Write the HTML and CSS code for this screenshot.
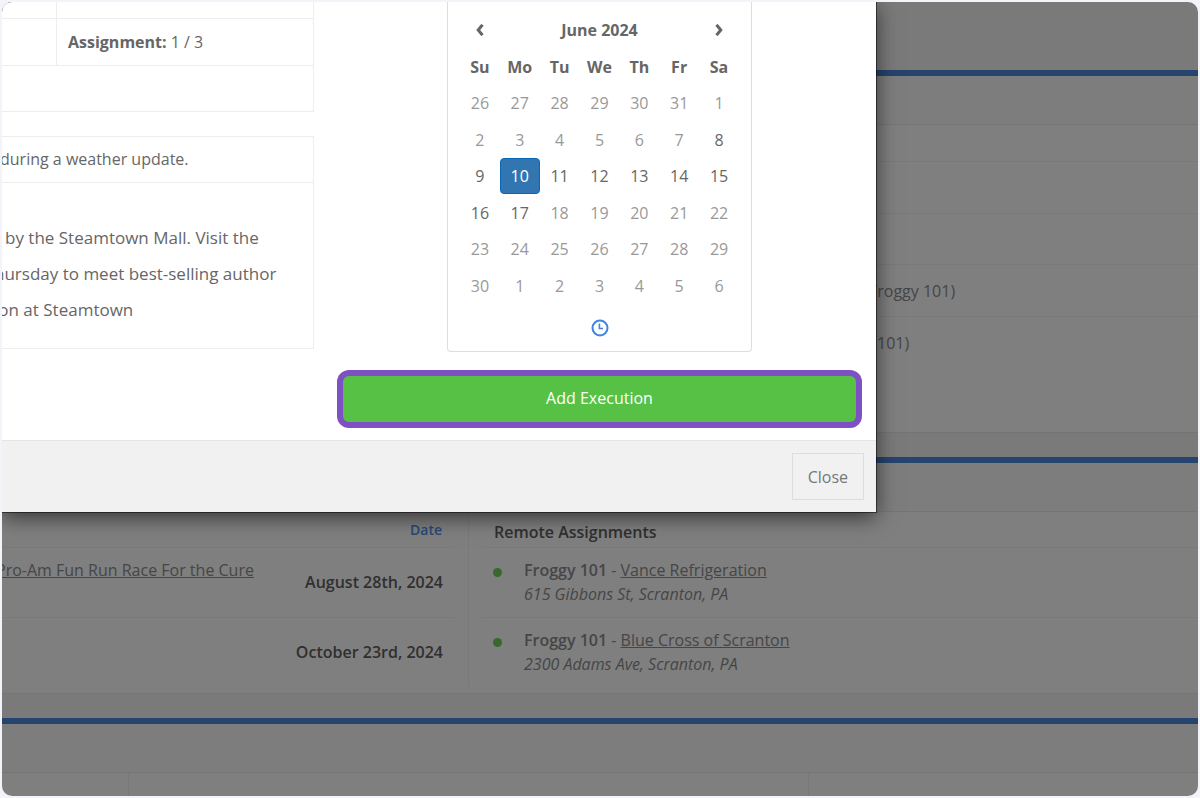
FILE: index.html
```html
<!DOCTYPE html>
<html lang="en">
<head>
    <meta charset="UTF-8">
    <meta name="viewport" content="width=device-width, initial-scale=1.0">
    <title>Add Execution</title>
    <link rel="stylesheet" href="styles.css">
</head>
<body>
    <div class="screen">
        <main class="page">
            <section class="panel panel-orders">
                <div class="panel-heading"></div>
                <ul class="rows">
                    <li class="row row-short"></li>
                    <li class="row"></li>
                    <li class="row row-medium"></li>
                    <li class="row row-station">Froggy 101)</li>
                    <li class="row row-station row-last">101)</li>
                </ul>
            </section>

            <section class="panel">
                <div class="panel-heading"></div>
                <div class="assignments">
                    <div class="col-events">
                        <table class="list">
                            <thead>
                                <tr><th></th><th class="date-head"><a href="#">Date</a></th></tr>
                            </thead>
                            <tbody>
                                <tr>
                                    <td class="event"><a href="#">Pro-Am Fun Run Race For the Cure</a></td>
                                    <td class="date">August 28th, 2024</td>
                                </tr>
                                <tr>
                                    <td class="event"></td>
                                    <td class="date">October 23rd, 2024</td>
                                </tr>
                            </tbody>
                        </table>
                    </div>
                    <div class="col-remote">
                        <table class="list">
                            <thead>
                                <tr><th colspan="2" class="remote-head">Remote Assignments</th></tr>
                            </thead>
                            <tbody>
                                <tr>
                                    <td class="status"><span class="dot"></span></td>
                                    <td class="place"><b>Froggy 101</b> - <a href="#">Vance Refrigeration</a><br><i>615 Gibbons St, Scranton, PA</i></td>
                                </tr>
                                <tr>
                                    <td class="status"><span class="dot"></span></td>
                                    <td class="place"><b>Froggy 101</b> - <a href="#">Blue Cross of Scranton</a><br><i>2300 Adams Ave, Scranton, PA</i></td>
                                </tr>
                            </tbody>
                        </table>
                    </div>
                </div>
            </section>

            <section class="panel">
                <div class="panel-heading"></div>
                <div class="split">
                    <div></div>
                    <div></div>
                    <div></div>
                </div>
            </section>
        </main>

        <div class="backdrop"></div>

        <div class="modal" role="dialog" aria-label="Add Execution">
            <div class="modal-body">
                <div class="details">
                    <table class="info">
                        <tbody>
                            <tr class="info-top"><td class="narrow"></td><td></td></tr>
                            <tr><td class="narrow"></td><td><b>Assignment:</b> 1 / 3</td></tr>
                            <tr class="info-last"><td colspan="2"></td></tr>
                        </tbody>
                    </table>
                    <div class="copy">
                        <p class="copy-title">during a weather update.</p>
                        <p class="copy-text">by the Steamtown Mall. Visit the<br>hursday to meet best-selling author<br>ion at Steamtown</p>
                    </div>
                </div>

                <div class="schedule">
                    <div class="picker">
                        <table class="calendar">
                            <thead>
                                <tr>
                                    <th><button type="button" class="nav" aria-label="Previous month"><svg width="10" height="12" viewBox="0 0 10 12"><path d="M7.5 .8 3.2 6l4.3 5.2" /></svg></button></th>
                                    <th colspan="5">June 2024</th>
                                    <th><button type="button" class="nav" aria-label="Next month"><svg width="10" height="12" viewBox="0 0 10 12"><path d="M2.5 .8 6.8 6l-4.3 5.2" /></svg></button></th>
                                </tr>
                                <tr><th>Su</th><th>Mo</th><th>Tu</th><th>We</th><th>Th</th><th>Fr</th><th>Sa</th></tr>
                            </thead>
                            <tbody>
                                <tr><td class="off">26</td><td class="off">27</td><td class="off">28</td><td class="off">29</td><td class="off">30</td><td class="off">31</td><td class="off">1</td></tr>
                                <tr><td class="off">2</td><td class="off">3</td><td class="off">4</td><td class="off">5</td><td class="off">6</td><td class="off">7</td><td>8</td></tr>
                                <tr><td>9</td><td class="active">10</td><td>11</td><td>12</td><td>13</td><td>14</td><td>15</td></tr>
                                <tr><td>16</td><td>17</td><td class="off">18</td><td class="off">19</td><td class="off">20</td><td class="off">21</td><td class="off">22</td></tr>
                                <tr><td class="off">23</td><td class="off">24</td><td class="off">25</td><td class="off">26</td><td class="off">27</td><td class="off">28</td><td class="off">29</td></tr>
                                <tr><td class="off">30</td><td class="off">1</td><td class="off">2</td><td class="off">3</td><td class="off">4</td><td class="off">5</td><td class="off">6</td></tr>
                            </tbody>
                        </table>
                        <button type="button" class="time" aria-label="Select time">
                            <svg width="18" height="18" viewBox="0 0 18 18"><circle cx="9" cy="9" r="7.5" /><path class="hands" d="M8.4 4.6v4.9h3.6" /></svg>
                        </button>
                    </div>
                    <button type="button" class="btn-add">Add Execution</button>
                </div>
            </div>
            <div class="modal-footer">
                <button type="button" class="btn-close">Close</button>
            </div>
        </div>
    </div>
</body>
</html>
```

FILE: styles.css
```css
* {
    box-sizing: border-box;
}
body {
    margin: 0;
    padding: 2px;
    background: #f3f3f9;
    font-family: "Open Sans", "Noto Sans", sans-serif;
    font-size: 16px;
    line-height: 24px;
    color: #666;
}
button {
    font: inherit;
    cursor: pointer;
}
table {
    width: 100%;
    border-collapse: separate;
    border-spacing: 0;
}
p, ul {
    margin: 0;
    padding: 0;
}
.screen {
    position: relative;
    height: calc(100vh - 4px);
    border-radius: 10px;
    overflow: hidden;
}

/* page behind the dialog */
.page {
    min-height: 100%;
    padding-top: 68px;
    background: #f5f5f5;
    color: #8c8c8c;
}
.panel {
    margin-bottom: 24px;
    background: #fff;
    border-top: 6px solid #4a88dc;
    border-bottom: 1px solid #e8e8e8;
}
.panel-heading {
    height: 49px;
    background: #fafafa;
    border-bottom: 1px solid #ebebeb;
}
.rows {
    list-style: none;
}
.row {
    height: 52px;
    padding: 14px 0;
    border-bottom: 1px solid #f2f2f2;
}
.row-short {
    height: 37px;
}
.row-medium {
    height: 51px;
}
.row-station {
    padding-left: 867px;
}
.row-last {
    height: 115px;
    padding-left: 875px;
    border-bottom: 0;
}
.assignments {
    display: flex;
    padding-bottom: 6px;
}
.col-events {
    width: 467px;
    padding-right: 14px;
    border-right: 1px solid #f2f2f2;
}
.col-remote {
    flex: 1;
    padding-left: 13px;
}
.list th {
    height: 36px;
    padding: 0 12px;
    text-align: left;
    border-bottom: 1px solid #f2f2f2;
}
.list td {
    height: 70px;
    padding: 10px 12px;
    vertical-align: top;
    border-bottom: 1px solid #f2f2f2;
}
.list tr:last-child td {
    height: 69px;
    border-bottom: 0;
}
.list a {
    color: inherit;
}
.list .date-head {
    font-size: 14px;
    font-weight: 600;
    text-align: right;
}
.list .date-head a {
    color: #5590e6;
    text-decoration: none;
}
.list .event {
    padding: 10px 0;
    white-space: nowrap;
}
.event a {
    margin-left: -6px;
}
.list .date {
    padding: 10px 11px 12px 0;
    vertical-align: middle;
    text-align: right;
    white-space: nowrap;
    font-weight: 600;
    color: #606060;
}
.list .remote-head {
    padding-top: 4px;
    font-weight: 600;
    color: #606060;
}
.list .status {
    width: 42px;
}
.list .place {
    padding-left: 0;
}
.place b {
    font-weight: 600;
}
.dot {
    display: block;
    width: 9px;
    height: 9px;
    margin: 10px 0 0 -1px;
    border-radius: 50%;
    background: #6ad458;
}
.split {
    display: grid;
    grid-template-columns: 126px 680px 1fr;
    height: 60px;
}
.split div + div {
    border-left: 1px solid #f2f2f2;
}
.backdrop {
    position: absolute;
    inset: 0;
    background: rgba(0, 0, 0, 0.5);
}

/* dialog */
.modal {
    position: absolute;
    top: 0;
    left: 0;
    width: calc(100% - 322px);
    background: #fff;
    box-shadow: 0 0 0 1px rgba(0, 0, 0, 0.5), 0 5px 20px rgba(0, 0, 0, 0.6);
}
.modal-body {
    display: grid;
    grid-template-columns: 312px 1fr;
    gap: 29px;
    padding: 0 20px 18px 0;
}
.info {
    margin-bottom: 24px;
    border-right: 1px solid #eee;
}
.info td {
    height: 47px;
    padding: 0 11px;
    border-bottom: 1px solid #eee;
}
.info .info-top td {
    height: 17px;
}
.info .info-last td {
    height: 46px;
}
.info .narrow {
    width: 55px;
    border-right: 1px solid #eee;
}
.info b {
    font-weight: 700;
}
.copy {
    border: 1px solid #eee;
    border-left: 0;
    overflow: hidden;
}
.copy-title {
    padding: 10px 0 11px;
    margin-left: -2px;
    border-bottom: 1px solid #eee;
}
.copy-text {
    padding: 37px 0 20px;
    margin-left: -8px;
    text-indent: 11px;
    font-size: 17px;
    line-height: 36px;
    white-space: nowrap;
}
.picker {
    width: 305px;
    margin: 0 auto 24px;
    padding: 10px 12px 11px;
    border: 1px solid #ddd;
    border-top: 0;
    border-radius: 0 0 4px 4px;
    text-align: center;
}
.calendar {
    table-layout: fixed;
}
.calendar th, .calendar td {
    height: 36px;
    padding: 0;
    border-radius: 4px;
    text-align: center;
}
.calendar tr:nth-child(even) th, .calendar tr:nth-child(even) td {
    height: 37px;
}
.calendar th {
    font-weight: 700;
}
.calendar .off {
    color: #999;
}
.calendar .active {
    background: #3276b1;
    border: 1px solid #0a67b5;
    color: #fff;
}
.nav {
    padding: 3px 0 0;
    border: 0;
    background: none;
}
.nav svg {
    display: block;
    fill: none;
    stroke: #666;
    stroke-width: 3;
}
.time {
    display: block;
    width: 100%;
    height: 36px;
    padding: 12px 0 0;
    border: 0;
    background: none;
    line-height: 0;
}
.time svg {
    fill: none;
    stroke: #3f85e0;
    stroke-width: 2;
}
.time .hands {
    stroke-width: 1.6;
}
.btn-add {
    display: block;
    width: 100%;
    height: 46px;
    padding: 0 0 2px;
    border: 0;
    border-radius: 6px;
    background: #57c146;
    box-shadow: 0 0 0 6px #7f4fc4;
    font-weight: 500;
    color: #fff;
}
.modal-footer {
    display: flex;
    justify-content: flex-end;
    padding: 12px;
    background: #f1f1f1;
    border-top: 1px solid #e5e5e5;
}
.btn-close {
    height: 47px;
    padding: 0 15px;
    border: 1px solid #ddd;
    background: #f1f1f1;
    color: #777;
}
```
